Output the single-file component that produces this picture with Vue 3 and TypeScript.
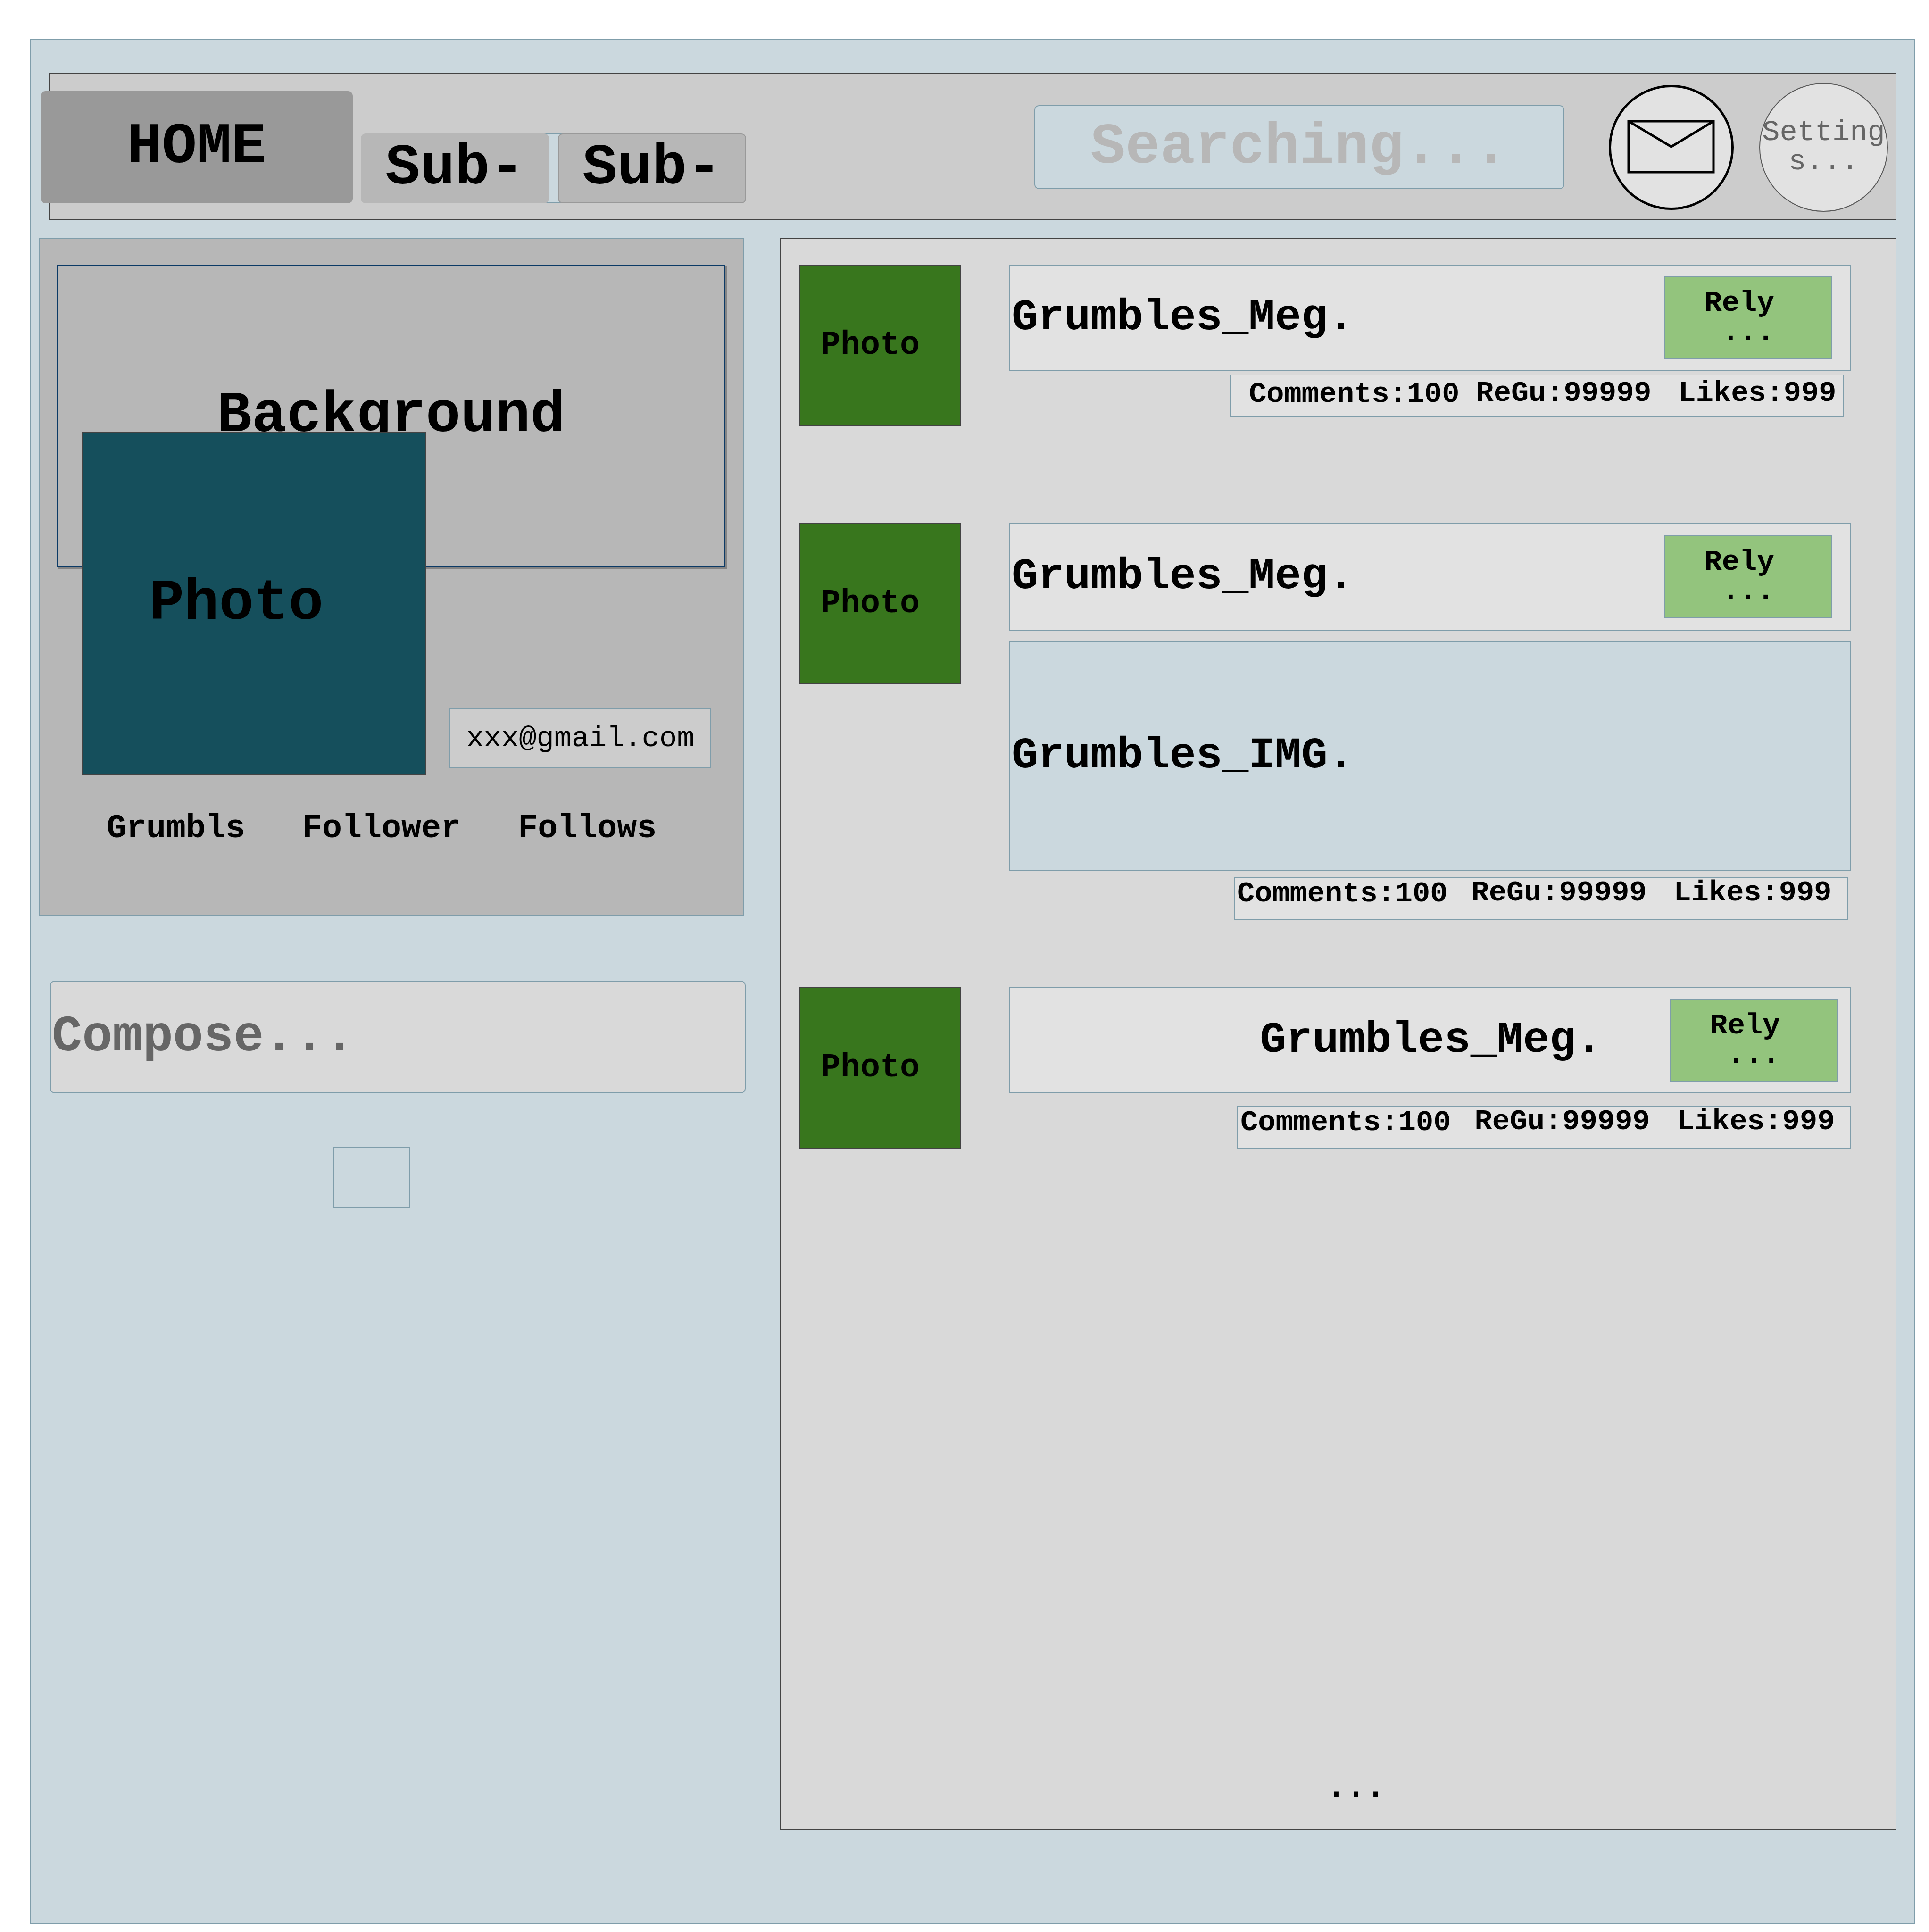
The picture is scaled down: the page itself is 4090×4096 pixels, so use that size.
<script setup lang="ts">
interface Post {
  id: number
  message: string
  image?: string
  comments: number
  regrumbles: number
  likes: number
  layout: 'plain' | 'with-image' | 'centered'
}

const posts: Post[] = [
  { id: 1, message: 'Grumbles_Meg.', comments: 100, regrumbles: 99999, likes: 999, layout: 'plain' },
  { id: 2, message: 'Grumbles_Meg.', image: 'Grumbles_IMG.', comments: 100, regrumbles: 99999, likes: 999, layout: 'with-image' },
  { id: 3, message: 'Grumbles_Meg.', comments: 100, regrumbles: 99999, likes: 999, layout: 'centered' },
]

const counters: string[] = ['Grumbls', 'Follower', 'Follows']
</script>

<template>
  <div class="page">
    <div class="board">
      <header class="topbar">
        <nav class="tabs">
          <button type="button" class="tab tab-home">HOME</button>
          <button type="button" class="tab tab-sub">Sub-</button>
          <span class="tab-joint"></span>
          <button type="button" class="tab tab-sub outlined">Sub-</button>
        </nav>
        <input class="search" type="text" placeholder="Searching..." aria-label="Search" />
        <button type="button" class="mail" aria-label="Messages">
          <svg viewBox="0 0 265 265" aria-hidden="true">
            <circle cx="132.5" cy="132.5" r="130" fill="#e2e2e2" />
            <path d="M42 77H222V185H42ZM42 77L132.500 131L222 77" fill="none" />
          </svg>
        </button>
        <button type="button" class="settings">Settings...</button>
      </header>

      <div class="columns">
        <aside class="side">
          <section class="profile">
            <div class="cover">Background</div>
            <div class="identity">
              <div class="avatar">Photo&nbsp;</div>
              <div class="email">xxx@gmail.com</div>
            </div>
            <div class="counters">
              <span v-for="counter in counters" :key="counter">{{ counter }}</span>
            </div>
          </section>
          <input class="compose" type="text" placeholder="Compose..." aria-label="Compose" />
          <button type="button" class="send" aria-label="Send"></button>
        </aside>

        <main class="feed">
          <article v-for="post in posts" :key="post.id" class="post" :class="post.layout">
            <div class="thumb">Photo&nbsp;</div>
            <div class="content">
              <div class="message">
                <span class="text">{{ post.message }}</span>
                <button type="button" class="reply">
                  <span>Rely&nbsp;</span>
                  <span>...</span>
                </button>
              </div>
              <div v-if="post.image" class="picture">{{ post.image }}</div>
              <div class="stats">
                <span class="comments">Comments:{{ post.comments }}</span>
                <span class="regrumbles">ReGu:{{ post.regrumbles }}</span>
                <span>Likes:{{ post.likes }}</span>
              </div>
            </div>
          </article>
          <p class="more">...</p>
        </main>
      </div>
    </div>
  </div>
</template>

<style>
body {
  margin: 0;
  background: #fff;
}
</style>

<style scoped>
.page,
.page * {
  box-sizing: border-box;
}

.page {
  --blue: #cbd8de;
  --line: #7f9daa;
  --dark: #434343;
  display: flex;
  min-height: 100vh;
  padding: 82px 30px 18px 63px;
  font-family: "Liberation Mono", monospace;
  font-weight: 700;
  color: #000;
}

button,
input {
  margin: 0;
  padding: 0;
  font: inherit;
  color: inherit;
}

.board {
  flex: 1;
  min-width: 0;
  display: flex;
  flex-direction: column;
  background: var(--blue);
  border: 2px solid var(--line);
}

/* Top bar */
.topbar {
  display: flex;
  align-items: center;
  min-height: 312px;
  margin: 70px 37px 0 38px;
  padding: 4px 16px 0 0;
  background: #ccc;
  border: 2px solid var(--dark);
}

.tabs {
  display: flex;
  align-items: flex-end;
  margin-left: -19px;
}

.tab {
  z-index: 1;
  border: 0;
  border-radius: 10px;
  font-size: 123px;
  line-height: 140px;
  text-align: center;
}

.tab-home {
  width: 662px;
  height: 238px;
  margin-right: 17px;
  background: #999;
}

.tab-sub {
  width: 399px;
  height: 148px;
  background: #b7b7b7;
}

.tab-sub.outlined {
  border: 2px solid #999;
}

.tab-joint {
  width: 39px;
  height: 148px;
  margin: 0 -10px;
  background: var(--blue);
  border: 2px solid var(--line);
}

.search {
  flex: 0 1 1124px;
  min-width: 0;
  height: 178px;
  margin: 0 94px 0 auto;
  background: var(--blue);
  border: 2px solid var(--line);
  border-radius: 10px;
  font-size: 123px;
  text-align: center;
}

.search::placeholder {
  color: #b7b7b7;
  opacity: 1;
}

.mail {
  width: 265px;
  height: 265px;
  margin-right: 54px;
  background: none;
  border: 0;
  border-radius: 50%;
}

.mail svg {
  display: block;
  width: 100%;
  height: 100%;
  stroke: #000;
  stroke-width: 5;
}

.settings {
  width: 273px;
  height: 273px;
  background: #e2e2e2;
  border: 2px solid #595959;
  border-radius: 50%;
  color: #666;
  font-size: 62px;
  font-weight: 400;
  line-height: 62px;
  word-break: break-all;
}

/* Columns */
.columns {
  flex: 1;
  display: grid;
  grid-template-columns: 1498fr 2368fr;
  gap: 72px;
  margin: 39px 37px 196px 18px;
}

.side {
  display: flex;
  flex-direction: column;
  min-width: 0;
}

.profile {
  display: flex;
  flex-direction: column;
  margin-right: 3px;
  padding: 54px 38px 143px 35px;
  background: #b7b7b7;
  border: 2px solid var(--line);
}

.cover {
  display: flex;
  align-items: center;
  justify-content: center;
  height: 642px;
  border: 2px solid #0b3a66;
  box-shadow: 4px 4px 0 #848484;
  background: #b7b7b7;
  font-size: 123px;
  line-height: 140px;
}

.identity {
  display: flex;
  align-items: flex-end;
  gap: 50px;
  margin: -288px 0 0 53px;
}

.avatar {
  display: flex;
  align-items: center;
  justify-content: center;
  width: 730px;
  height: 729px;
  background: #154f5c;
  border: 2px solid var(--dark);
  font-size: 123px;
  line-height: 140px;
}

.email {
  display: flex;
  align-items: center;
  justify-content: center;
  width: 555px;
  height: 128px;
  margin-bottom: 15px;
  background: #ccc;
  border: 2px solid var(--line);
  font-size: 62px;
  font-weight: 400;
}

.counters {
  display: flex;
  gap: 121px;
  margin: 73px 0 0 106px;
  font-size: 70px;
  line-height: 80px;
}

.compose {
  height: 239px;
  margin: 137px 0 0 23px;
  padding-left: 2px;
  background: #d9d9d9;
  border: 2px solid var(--line);
  border-radius: 10px;
  font-size: 107px;
}

.compose::placeholder {
  color: #666;
  opacity: 1;
}

.send {
  width: 163px;
  height: 129px;
  margin: 114px 0 0 624px;
  background: none;
  border: 2px solid var(--line);
}

/* Feed */
.feed {
  display: flex;
  flex-direction: column;
  min-width: 0;
  padding: 54px 94px 47px 40px;
  background: #d9d9d9;
  border: 2px solid var(--dark);
}

.post {
  display: flex;
  align-items: flex-start;
  gap: 102px;
}

.post.plain {
  margin-bottom: 206px;
}

.post.with-image {
  margin-bottom: 143px;
}

.thumb {
  display: flex;
  align-items: center;
  justify-content: center;
  flex: none;
  width: 342px;
  height: 342px;
  background: #38761d;
  border: 2px solid var(--dark);
  font-size: 70px;
  line-height: 80px;
}

.content {
  flex: 1;
  min-width: 0;
  display: flex;
  flex-direction: column;
}

.message {
  display: flex;
  align-items: center;
  justify-content: space-between;
  height: 225px;
  padding: 0 38px 0 4px;
  background: #e2e2e2;
  border: 2px solid var(--line);
}

.with-image .message {
  height: 228px;
}

/* The left padding mirrors the reply button, so the text sits mid-box */
.centered .message {
  padding: 0 26px 0 387px;
}

.text,
.picture {
  font-size: 93px;
  line-height: 106px;
}

.centered .text {
  flex: 1;
  text-align: center;
}

.reply {
  display: flex;
  flex-direction: column;
  align-items: center;
  justify-content: center;
  width: 357px;
  height: 176px;
  background: #93c47d;
  border: 2px solid var(--line);
  font-size: 62px;
  line-height: 62px;
}

.picture {
  display: flex;
  align-items: center;
  height: 486px;
  margin-top: 23px;
  padding-left: 4px;
  background: var(--blue);
  border: 2px solid var(--line);
}

.stats {
  display: flex;
  align-self: flex-end;
  width: 1302px;
  height: 90px;
  background: #e2e2e2;
  border: 2px solid var(--line);
  font-size: 62px;
  line-height: 62px;
  white-space: nowrap;
}

.comments {
  padding-top: 2px;
  margin-right: 50px;
}

.regrumbles {
  margin-right: 57px;
}

.plain .stats {
  margin: 8px 15px 0 0;
  padding: 7px 0 0 38px;
}

.plain .comments {
  margin-right: 35px;
}

.with-image .stats {
  margin: 14px 7px 0 0;
  padding-left: 5px;
}

.centered .stats {
  margin-top: 27px;
  padding-left: 5px;
}

.more {
  margin: auto 0 0;
  padding-left: 130px;
  font-size: 70px;
  line-height: 80px;
  text-align: center;
}
</style>
